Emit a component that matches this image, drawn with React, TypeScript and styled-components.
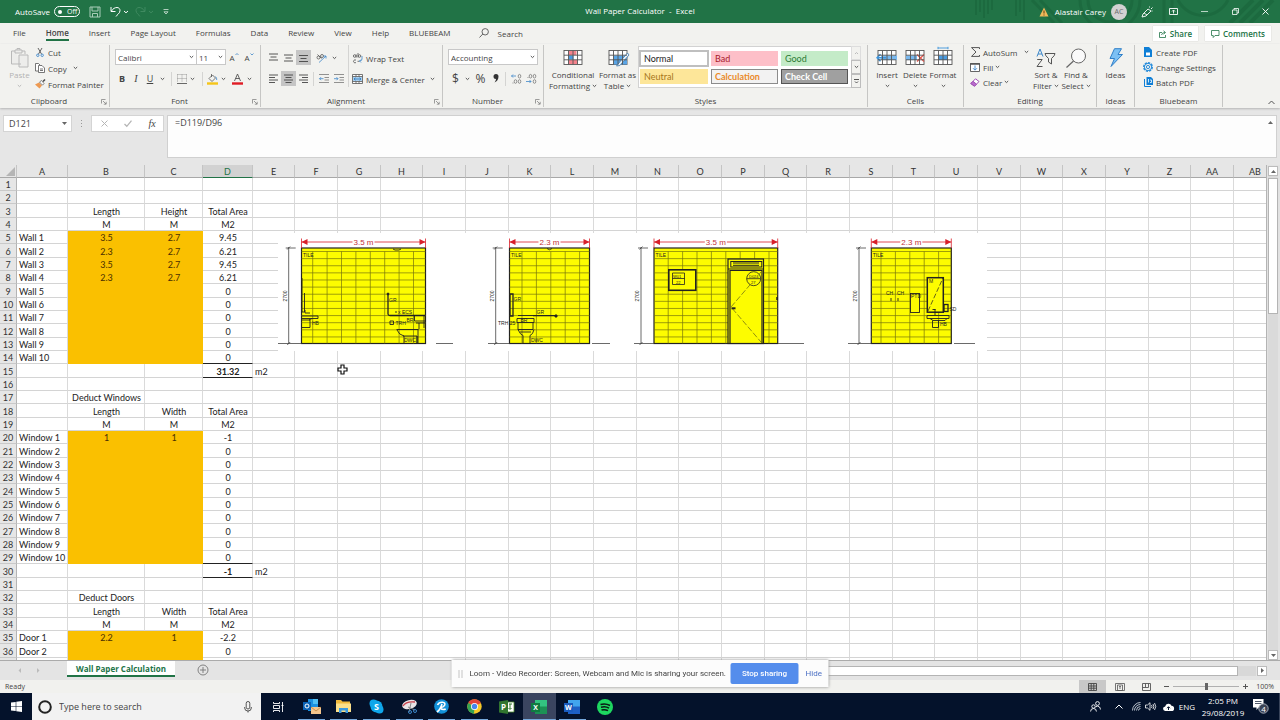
import React from "react";
import styled, { createGlobalStyle, css } from "styled-components";

const ui = `"Open Sans", "Noto Sans", sans-serif`;
const sheetFont = `Lato, "Open Sans", sans-serif`;
const green = "#217346";
const ink = "#444";

const Global = createGlobalStyle`
  *, *::before, *::after { box-sizing: border-box; }
  html, body { margin: 0; padding: 0; background: #e6e6e6; }
  body { font: 8px/11px ${ui}; color: ${ink}; }
  button, input, select, textarea { font: inherit; color: inherit; margin: 0; padding: 0; border: 0; background: none; border-radius: 0; outline: none; }
  svg { display: block; flex: none; overflow: visible; }
`;

const Window = styled.div`
  display: flex;
  flex-direction: column;
  height: 100vh;
  overflow: hidden;
`;

/* ---------- icons ---------- */

type IconProps = { w: number; h: number; children: React.ReactNode; stroke?: string; sw?: number };
const Icon = ({ w, h, children, stroke = "#555", sw = 1 }: IconProps) => (
  <svg width={w} height={h} viewBox={`0 0 ${w} ${h}`} fill="none" stroke={stroke} strokeWidth={sw} aria-hidden="true">
    {children}
  </svg>
);

const Chevron = ({ color = "#555" }: { color?: string }) => (
  <Icon w={5} h={4} stroke={color}><path d="M.8 1l1.7 1.6L4.200 1" /></Icon>
);

const Lines = ({ rows, w = 9 }: { rows: [number, number, number][]; w?: number }) => (
  <Icon w={w} h={9} stroke="#444" sw={0.9}>
    {rows.map(([x, y, len], i) => <path key={i} d={`M${x} ${y}h${len}`} />)}
  </Icon>
);

const TableGlyph = ({ children }: { children?: React.ReactNode }) => (
  <Icon w={20} h={19} stroke="#555" sw={0.9}>
    <rect x="1" y="2.500" width="18" height="14" fill="#fff" />
    {children}
    <path d="M1 7.200h18M1 11.800h18M5.500 2.500v14M10 2.500v14M14.500 2.500v14" />
  </Icon>
);

/* ---------- title bar ---------- */

const TitleBar = styled.header`
  position: relative;
  flex: none;
  display: grid;
  grid-template-columns: 1fr auto 1fr;
  align-items: center;
  height: 23px;
  background: ${green};
  color: #fff;
`;
const TitleArt = styled.svg`
  position: absolute;
  top: 0;
  right: 0;
  overflow: hidden;
  opacity: 0.6;
`;
const TitleSide = styled.div<{ $end?: boolean }>`
  position: relative;
  display: flex;
  align-items: center;
  justify-content: ${p => (p.$end ? "flex-end" : "flex-start")};
  padding-left: 15px;
`;
const TitleText = styled.h1`
  align-self: start;
  margin: 0;
  font: 8px/21px ${ui};
  white-space: pre;
`;
const TitleButton = styled.button<{ $w: number }>`
  display: flex;
  align-items: center;
  justify-content: center;
  width: ${p => p.$w}px;
  height: 22px;
`;
const Toggle = styled.button`
  display: flex;
  align-items: center;
  gap: 5px;
  width: 26px;
  height: 11px;
  margin-left: 4px;
  padding-left: 3px;
  border: 1px solid #fff;
  border-radius: 6px;
  font-size: 7px;
  line-height: 9px;
  &::before { content: ""; width: 4px; height: 4px; border-radius: 50%; background: #fff; }
`;
const Avatar = styled.span`
  width: 16px;
  height: 16px;
  margin: 0 9px 0 5px;
  border-radius: 50%;
  background: #d2d2d2;
  color: #6b6b6b;
  font-size: 7px;
  line-height: 16px;
  text-align: center;
`;

/* ---------- tabs ---------- */

const TabRow = styled.nav`
  flex: none;
  display: flex;
  align-items: flex-start;
  height: 21px;
  padding: 0 9px 0 3px;
  background: #f2f2ef;
`;
const Tab = styled.button<{ $active?: boolean }>`
  height: 18px;
  margin: 0 10px;
  padding-top: 2px;
  border-bottom: 2px solid ${p => (p.$active ? green : "transparent")};
  font-weight: ${p => (p.$active ? 600 : 400)};
  font-size: 8px;
`;
const SearchTab = styled.button`
  display: flex;
  align-items: center;
  gap: 9px;
  height: 20px;
  margin-left: 18px;
`;
const TabActions = styled.div`
  display: flex;
  gap: 7px;
  margin: 3px 0 0 auto;
`;
const ActionButton = styled.button`
  display: flex;
  align-items: center;
  gap: 3px;
  height: 15px;
  padding: 0 6px;
  background: #fff;
  color: ${green};
  font-weight: 600;
  box-shadow: 0 0 1px #bbb;
`;

/* ---------- ribbon ---------- */

const Ribbon = styled.section`
  position: relative;
  z-index: 1;
  flex: none;
  display: flex;
  height: 64px;
  background: #f2f2ef;
  box-shadow: 0 1px 2px #b5b5b5;
`;
const GroupBox = styled.div<{ $w: number }>`
  position: relative;
  flex: none;
  display: flex;
  flex-direction: column;
  width: ${p => p.$w}px;
  margin: 1px 0;
  border-right: 1px solid #c6c6c4;
`;
const GroupBody = styled.div<{ $pad: number }>`
  flex: 1;
  display: flex;
  padding: 0 0 0 ${p => p.$pad}px;
`;
const GroupLabel = styled.div<{ $inset?: boolean }>`
  display: flex;
  justify-content: center;
  height: 12px;
  padding-right: ${p => (p.$inset ? 11 : 0)}px;
  line-height: 12px;
`;
const Launcher = styled.button`
  position: absolute;
  right: 1px;
  bottom: 2px;
  width: 7px;
  height: 7px;
`;
const Col = styled.div<{ $gap?: number; $top?: number; $w?: number }>`
  display: flex;
  flex-direction: column;
  gap: ${p => p.$gap ?? 0}px;
  padding-top: ${p => p.$top ?? 0}px;
  ${p => p.$w && css`width: ${p.$w}px;`}
`;
const Row = styled.div<{ $h?: number }>`
  display: flex;
  align-items: center;
  height: ${p => p.$h ?? 15}px;
`;
const Slot = styled.button<{ $w: number; $on?: boolean }>`
  display: flex;
  align-items: center;
  justify-content: center;
  flex: none;
  width: ${p => p.$w}px;
  height: 15px;
  background: ${p => (p.$on ? "#c5c5c5" : "none")};
`;
const Letter = styled(Slot)<{ $kind: "b" | "i" | "u" | "n" }>`
  font-size: 9px;
  ${p => p.$kind === "b" && css`font-weight: 700;`}
  ${p => p.$kind === "i" && css`font-family: "Liberation Serif", serif; font-style: italic; font-size: 10px;`}
  ${p => p.$kind === "u" && css`text-decoration: underline;`}
  ${p => p.$kind === "n" && css`font-size: 12px;`}
`;
const Rule = styled.span<{ $w: number; $h?: number }>`
  display: flex;
  justify-content: center;
  width: ${p => p.$w}px;
  &::before { content: ""; width: 1px; height: ${p => p.$h ?? 14}px; background: #d4d4d2; }
`;
const Command = styled.button`
  display: flex;
  align-items: center;
  gap: 2px;
  height: 14px;
  white-space: nowrap;
`;
const CommandIcon = styled.span<{ $w?: number }>`
  display: flex;
  justify-content: center;
  width: ${p => p.$w ?? 12}px;
`;
const Spacer = styled.span<{ $w: number }>`
  width: ${p => p.$w}px;
`;
const BigButton = styled.button<{ $w: number; $faded?: boolean }>`
  display: flex;
  flex-direction: column;
  align-items: center;
  width: ${p => p.$w}px;
  height: 50px;
  padding-top: 2px;
  line-height: 11px;
  white-space: nowrap;
  color: ${p => (p.$faded ? "#b3b3b3" : "inherit")};
`;
const BigIcon = styled.span`
  display: flex;
  align-items: center;
  height: 21px;
  margin-bottom: 1px;
`;
const Line = styled.span`
  display: flex;
  align-items: center;
  justify-content: center;
  gap: 2px;
  height: 11px;
`;
const PickerBox = styled.label<{ $w: number }>`
  position: relative;
  display: flex;
  align-items: center;
  width: ${p => p.$w}px;
  height: 16px;
  border: 1px solid #c8c8c8;
  background: #fff;
  & + & { border-left: 0; }
  svg { position: absolute; right: 2px; }
`;
const Picker = styled.select`
  appearance: none;
  width: 100%;
  height: 14px;
  padding-left: 2px;
`;
const Gallery = styled.div`
  display: grid;
  grid-template-columns: 68px 67px 67px;
  grid-auto-rows: 15px;
  gap: 3px;
  align-content: center;
  width: 213px;
  height: 42px;
  margin-top: 1px;
  padding: 0 1px;
  border: 1px solid #d2d2d2;
  border-right: 0;
  background: #fff;
`;
const StyleCell = styled.button<{ $bg: string; $fg: string; $edge?: string; $bold?: boolean }>`
  padding-left: 3px;
  font-family: ${sheetFont};
  font-size: 9px;
  font-weight: ${p => (p.$bold ? 700 : 400)};
  text-align: left;
  color: ${p => p.$fg};
  background: ${p => p.$bg};
  border: 1px solid ${p => p.$edge ?? p.$bg};
  ${p => p.$edge === "#bfbfbf" && css`box-shadow: 0 0 0 1px #bfbfbf;`}
`;
const GalleryArrows = styled.div`
  display: flex;
  flex-direction: column;
  width: 10px;
  height: 42px;
  margin-top: 1px;
`;
const GalleryArrow = styled.button<{ $off?: boolean }>`
  flex: 1;
  display: flex;
  align-items: center;
  justify-content: center;
  border: 1px solid ${p => (p.$off ? "#ddd" : "#bdbdbd")};
`;
const CollapseRibbon = styled.button`
  display: flex;
  align-items: center;
  align-self: flex-end;
  height: 12px;
  margin: 0 5px 0 auto;
`;

/* ---------- formula bar ---------- */

const FormulaBar = styled.section`
  flex: none;
  display: flex;
  align-items: flex-start;
  height: 57px;
  padding: 7px 3px 0;
  background: #e6e6e6;
`;
const NameBox = styled.label`
  display: flex;
  align-items: center;
  width: 69px;
  height: 17px;
  padding: 0 4px 0 5px;
  border: 1px solid #d4d4d4;
  background: #fff;
  input { flex: 1; min-width: 0; font-size: 9px; }
`;
const Grip = styled.span`
  width: 19px;
  height: 17px;
  display: flex;
  align-items: center;
  justify-content: center;
`;
const FxBox = styled.div`
  display: flex;
  align-items: center;
  width: 73px;
  height: 17px;
  margin-right: 3px;
  border: 1px solid #d4d4d4;
  background: #fff;
`;
const FormulaInput = styled.label`
  flex: 1;
  display: flex;
  height: 43px;
  padding: 1px 3px 1px 7px;
  border: 1px solid #d0d0d0;
  background: #fdfdfd;
  textarea { flex: 1; height: 36px; resize: none; font: 9px/12px ${ui}; }
`;

/* ---------- worksheet ---------- */

const Workspace = styled.main`
  position: relative;
  flex: 1;
  display: flex;
  min-height: 0;
`;
const Sheet = styled.div`
  position: relative;
  flex: 1;
  min-width: 0;
  overflow: hidden;
  background: #fff;
  border-right: 1px solid #b4b4b4;
`;
const Grid = styled.table`
  width: 1277px;
  min-width: 100%;
  table-layout: fixed;
  border-collapse: separate;
  border-spacing: 0;
  font: 9px/10px ${sheetFont};
  color: #222;
  tbody tr { height: 13px; }
  tbody tr:nth-child(3n) { height: 14px; }
`;
const ColHead = styled.th<{ $on?: boolean }>`
  height: 13px;
  padding: 1px 0 0;
  font-weight: 400;
  text-align: center;
  color: ${p => (p.$on ? green : "#333")};
  background: ${p => (p.$on ? "#d2d2d2" : "#e6e6e6")};
  border-right: 1px solid #c4c4c4;
  border-bottom: 1px solid ${p => (p.$on ? green : "#a8a8a8")};
`;
const RowHead = styled.th`
  padding: 2px 0 0;
  font-weight: 400;
  text-align: center;
  color: #333;
  background: #e6e6e6;
  border-right: 1px solid #b4b4b4;
  border-bottom: 1px solid #c9c9c9;
`;
const Cell = styled.td<{ $fill?: boolean; $total?: boolean; $above?: boolean; $center?: boolean }>`
  padding: 2px 0 0 ${p => (p.$center ? 1 : 2)}px;
  white-space: nowrap;
  overflow: hidden;
  text-align: ${p => (p.$center ? "center" : "left")};
  font-weight: ${p => (p.$total ? 700 : 400)};
  color: ${p => (p.$fill && p.$center ? "#4a2f00" : "inherit")};
  background: ${p => (p.$fill ? "#fac000" : "#fff")};
  border-right: 1px solid ${p => (p.$fill ? "#fac000" : "#dadada")};
  border-bottom: 1px solid ${p => (p.$total || p.$above ? "#222" : p.$fill ? "#fac000" : "#d4d4d4")};
`;
const Drawing = styled.svg`
  position: absolute;
  left: 278px;
  top: 68px;
`;
const Pointer = styled.svg`
  position: absolute;
  left: 337px;
  top: 199px;
`;
const VScroll = styled.div`
  display: flex;
  flex-direction: column;
  flex: none;
  width: 13px;
  padding: 1px 2px 0 1px;
  background: #e2e2e2;
`;
const ScrollButton = styled.button`
  flex: none;
  display: flex;
  align-items: center;
  justify-content: center;
  width: 10px;
  height: 10px;
  border: 1px solid #bcbcbc;
  background: #fff;
`;
const VTrack = styled.div`
  flex: 1;
  padding-top: 2px;
  background: #dadada;
  &::before { content: ""; display: block; height: 136px; border: 1px solid #b4b4b4; background: #fff; }
`;
const SheetBar = styled.div`
  flex: none;
  display: flex;
  height: 20px;
  background: #e4e4e4;
  border-top: 1px solid #ababab;
`;
const SheetNav = styled.div`
  display: flex;
  align-items: center;
  gap: 14px;
  width: 67px;
  padding-left: 18px;
`;
const SheetTab = styled.button`
  width: 108px;
  height: 16px;
  background: #fff;
  border-bottom: 2px solid ${green};
  color: ${green};
  font-weight: 700;
`;
const AddSheet = styled.button`
  display: flex;
  height: 18px;
  align-items: center;
  margin-left: 22px;
`;
const HScroll = styled.div`
  display: flex;
  align-items: center;
  width: 480px;
  margin: 0 13px 0 auto;
`;
const HTrack = styled.div`
  flex: 1;
  height: 10px;
  margin-right: 1px;
  padding-right: 18px;
  background: #d8d8d8;
  &::before { content: ""; display: block; height: 10px; border: 1px solid #b4b4b4; background: #fff; }
`;
const StatusBar = styled.footer`
  flex: none;
  display: flex;
  align-items: center;
  height: 13px;
  padding: 0 6px 0 5px;
  background: #f1f1ee;
  font-size: 7px;
`;
const StatusEnd = styled.div`
  display: flex;
  align-items: center;
  height: 13px;
  margin-left: auto;
`;
const ViewButton = styled.button<{ $on?: boolean }>`
  display: flex;
  align-items: center;
  justify-content: center;
  width: 27px;
  height: 13px;
  background: ${p => (p.$on ? "#c8c8c8" : "none")};
`;
const Zoom = styled.input`
  appearance: none;
  width: 66px;
  height: 9px;
  margin: 0 4px;
  background: linear-gradient(#b0b0b0, #b0b0b0) center / 100% 1px no-repeat;
  &::-webkit-slider-thumb { appearance: none; width: 3px; height: 7px; background: #666; }
`;

/* ---------- sharing notice ---------- */

const Notice = styled.aside`
  position: fixed;
  left: 50%;
  bottom: 33px;
  z-index: 2;
  display: flex;
  align-items: center;
  width: 377px;
  height: 27px;
  padding-left: 7px;
  transform: translateX(-50%);
  background: #fcfcfc;
  box-shadow: 0 0 3px #888;
`;
const NoticeText = styled.span`
  width: 268px;
  padding-left: 7px;
  font-family: Roboto, ${ui};
  white-space: nowrap;
`;
const StopButton = styled.button`
  width: 68px;
  height: 21px;
  margin-right: 7px;
  border-radius: 2px;
  background: #548dec;
  color: #fff;
  font-family: Roboto, ${ui};
  font-weight: 500;
`;
const HideLink = styled.a`
  color: #4c70c4;
  font-family: Roboto, ${ui};
  text-decoration: none;
`;

/* ---------- taskbar ---------- */

const Taskbar = styled.div`
  flex: none;
  display: flex;
  height: 27px;
  background: #04122b;
  color: #fff;
`;
const TaskButton = styled.button<{ $w: number }>`
  display: flex;
  align-items: center;
  justify-content: center;
  width: ${p => p.$w}px;
  height: 27px;
`;
const TaskSearch = styled.label`
  display: flex;
  align-items: center;
  width: 229px;
  padding: 0 9px 0 6px;
  background: #f2f2f2;
  color: #444;
  input { flex: 1; min-width: 0; margin-left: 7px; font: 9px/14px ${ui}; }
  input::placeholder { color: #444; opacity: 1; }
`;
const Apps = styled.div`
  display: flex;
  width: 326px;
`;
const AppButton = styled.button<{ $active?: boolean; $open?: boolean }>`
  flex: 1;
  display: flex;
  align-items: center;
  justify-content: center;
  height: 27px;
  background: ${p => (p.$active ? "#3a4560" : "none")};
  ${p => p.$open && css`
    background-image: linear-gradient(#76a9dc, #76a9dc);
    background-repeat: no-repeat;
    background-position: bottom;
    background-size: ${p.$active ? "100%" : "27px"} 1px;
  `}
`;
const Tray = styled.div`
  display: flex;
  align-items: center;
  margin-left: auto;
  padding-right: 2px;
  border-right: 1px solid #39445a;
`;
const Clock = styled.time`
  width: 50px;
  line-height: 12px;
  text-align: center;
`;

const Group = ({ w, label, pad = 5, launcher, children }: { w: number; label: string; pad?: number; launcher?: boolean; children: React.ReactNode }) => (
  <GroupBox $w={w}>
    <GroupBody $pad={pad}>{children}</GroupBody>
    <GroupLabel $inset={launcher}>{label}</GroupLabel>
    {launcher && (
      <Launcher aria-label={`${label} settings`}>
        <Icon w={6} h={6} stroke="#777" sw={0.7}><path d="M.5 4.500V.5h4M2 2l3 3M5.200 2.800v2.400H2.800" /></Icon>
      </Launcher>
    )}
  </GroupBox>
);

/* ---------- sheet data ---------- */

type RowData = { a?: string; b?: string; c?: string; d?: string; e?: string; fill?: boolean; total?: boolean; blank?: boolean };

const columns: [string, number][] = [["A", 51], ["B", 77], ["C", 58], ["D", 50]];
const cycle = [42, 43, 43];
[..."EFGHIJKLMNOPQRSTUVWXYZ", "AA", "AB"].forEach((name, i) => columns.push([name, cycle[i % 3]]));

const head = (c: string): RowData => ({ b: "Length", c, d: "Total Area" });
const units: RowData = { b: "M", c: "M", d: "M2" };
const items = (name: string, values: [string, string, string][], count: number): RowData[] =>
  Array.from({ length: count }, (_, i) => ({
    a: `${name} ${i + 1}`,
    b: values[i]?.[0],
    c: values[i]?.[1],
    d: values[i]?.[2] ?? "0",
    fill: true,
  }));

const rows: RowData[] = [
  {}, {}, head("Height"), units,
  ...items("Wall", [["3.5", "2.7", "9.45"], ["2.3", "2.7", "6.21"], ["3.5", "2.7", "9.45"], ["2.3", "2.7", "6.21"]], 10),
  { d: "31.32", e: "m2", total: true },
  {}, { b: "Deduct Windows" }, head("Width"), units,
  ...items("Window", [["1", "1", "-1"]], 10),
  { d: "-1", e: "m2", total: true },
  {}, { b: "Deduct Doors" }, head("Width"), units,
  ...items("Door", [["2.2", "1", "-2.2"]], 2),
  { fill: true, blank: true },
];

/* ---------- wall elevations ---------- */

const Wall = ({ x1, x2, first, dim, floor, label }: { x1: number; x2: number; first: number; dim: number; floor: [number, number, number]; label: string }) => {
  const mid = (x1 + x2) / 2;
  const joints: number[] = [];
  for (let x = first; x < x2 - 2; x += 14.4) joints.push(x);
  return (
    <g>
      <rect x={x1} y="248" width={x2 - x1} height="95.500" fill="#fdfc00" stroke="#222" strokeWidth="1.200" />
      <g stroke="#77760c" strokeWidth=".7">
        {Array.from({ length: 13 }, (_, i) => <path key={i} d={`M${x1} ${251.5 + i * 7.12}H${x2}`} />)}
        {joints.map(x => <path key={x} d={`M${x} 251.500V343.500`} />)}
      </g>
      <g stroke="#d8202a" strokeWidth=".8" fill="#d8202a">
        <path d={`M${x1} 242H${mid - 11}M${mid + 11} 242H${x2}M${x1} 238.500V248M${x2} 238.500V248`} />
        <path stroke="none" d={`M${x1} 242l6-3v6zM${x2} 242l-6-3v6z`} />
      </g>
      <text x={mid} y="245" fontSize="8" fill="#c23038" textAnchor="middle">{label}</text>
      <path d={`M${dim} 247V344M${dim - 3} 248h10M${floor[0]} 343.500H${x1}M${floor[1]} 343.500H${floor[2]}M${dim - 1.5} 249.500l3-3M${dim - 1.5} 345l3-3`} stroke="#444" strokeWidth=".8" />
      <text transform={`translate(${dim - 2} 296) rotate(-90)`} fontSize="5" fill="#222" textAnchor="middle">2700</text>
      <text x={x1 + 1.5} y="256.500" fontSize="5" fill="#222">TILE</text>
    </g>
  );
};

const Elevations = () => (
  <Drawing width="709" height="117" viewBox="278 233 709 117" fill="none" role="img" aria-label="Wall elevations" fontFamily="Liberation Sans, sans-serif">
    <rect x="278" y="233" width="709" height="118" fill="#fff" />
    <Wall x1={301.5} x2={425.5} first={312.7} dim={288.7} floor={[278, 436, 453]} label="3.5 m" />
    <Wall x1={509.5} x2={589.5} first={522} dim={495.7} floor={[488, 592, 610]} label="2.3 m" />
    <Wall x1={654} x2={777.7} first={668.2} dim={641} floor={[634, 778, 804]} label="3.5 m" />
    <Wall x1={871.3} x2={951.3} first={881} dim={859} floor={[848, 954, 975]} label="2.3 m" />
    <g stroke="#222" strokeWidth=".9">
      <path d="M302 278v34M304.500 293v19h-3M302 316h16v2.500h-16M302 320h8v7.500h-8M305 310v3h5M309 320l3-1.500" />
      <path d="M388 294v20q0 1.500 2 1.500h35" strokeWidth="1.300" />
      <circle cx="388" cy="294" r="1" fill="#222" />
      <path d="M414.500 316v5h11M416 323h9M419 323v6M396.500 329.500h22M397 330q2 5 7 6v7M403 336h14v7M418 329.500v13.500M417 336v7M424 315v13" />
      <path d="M390 321h3.500v3.500H390zM395 312h2M393 249l2 1h4l2-1" />
    </g>
    <g stroke="#222" strokeWidth=".9">
      <path d="M510 294h3v22h-3zM533 315.700h23" strokeWidth="1.300" />
      <circle cx="556" cy="316" r="1.200" fill="#222" />
      <path d="M518 315.500h16M517 318.500h17v4h-17zM518 323v6.500h15V323M518 329.500q2 5 5 6v8h7v-8q3-1 4-6M520 332h11M547 248.500q2.500 2.500 5 0" />
    </g>
    <g stroke="#222">
      <rect x="668.800" y="269.800" width="27" height="20.500" strokeWidth="1.600" fill="#fdfc00" />
      <path d="M672.500 273h12v11.500h-12zM672.500 278.500h12" strokeWidth=".8" />
      <rect x="728" y="259" width="35.500" height="84.500" fill="#fdfc00" strokeWidth="1.200" />
      <rect x="730.800" y="261.500" width="31" height="5.500" strokeWidth="1" />
      <path d="M733 263h26M733 265.300h26M728 269h35.500" strokeWidth="1" />
      <path d="M730 343.500V270.500h32V343" strokeWidth="1.200" />
      <path d="M761 272L731 307l30 35" strokeWidth=".5" strokeDasharray="6 2" />
      <circle cx="753.700" cy="278.700" r="7" fill="#fdfc00" strokeWidth=".8" />
      <path d="M746.700 278.700h14" strokeWidth=".8" />
      <path d="M731.500 308.300h4" strokeWidth="2" />
      <path d="M777 297v3" strokeWidth="1.500" />
    </g>
    <g stroke="#222" strokeWidth=".9">
      <rect x="910.500" y="293.500" width="9" height="19" fill="#fdfc00" />
      <rect x="927.300" y="277.700" width="16" height="34.500" fill="#fdfc00" strokeWidth="1.500" />
      <path d="M928 311l15-33" strokeWidth=".7" strokeDasharray="5 2" />
      <rect x="944" y="304.500" width="4" height="7" strokeWidth="1.300" />
      <path d="M927 315.500h22v3h-22zM930 318.500l3 2h12l2-2M932.500 320.500v7h6v-7M935 309v6M932.500 309.500h3M891 298v3M898 298v3" />
    </g>
    <g fill="#222" fontSize="5">
      <text x="312" y="325">HB</text>
      <text x="389" y="302">GR</text>
      <text x="398" y="313.500">x ECS</text>
      <text x="395.500" y="325">TRH</text>
      <text x="406.500" y="322">BR</text>
      <text x="404" y="341.500">DWC</text>
      <text x="513.500" y="301">GR</text>
      <text x="536.500" y="314">GR</text>
      <text x="520.500" y="321.500">BR</text>
      <text x="498" y="325">TRH 25</text>
      <text x="531" y="341.500">DWC</text>
      <text x="673" y="277.500" fontSize="4">W01</text>
      <text x="676" y="283.500" fontSize="4">22</text>
      <text x="749" y="278" fontSize="4">D024</text>
      <text x="751" y="283.500" fontSize="4">27</text>
      <text x="886" y="294.500">CH</text>
      <text x="897" y="294.500">CH</text>
      <text x="911" y="298">PTD</text>
      <text x="929" y="283">M</text>
      <text x="949.500" y="310.500">SD</text>
      <text x="940" y="326">HB</text>
    </g>
  </Drawing>
);

const gallery = [
  { label: "Normal", bg: "#fff", fg: "#222", edge: "#bfbfbf" },
  { label: "Bad", bg: "#fdbfc8", fg: "#a81b2c" },
  { label: "Good", bg: "#c4ebc8", fg: "#2c7a35" },
  { label: "Neutral", bg: "#fde699", fg: "#a8761a" },
  { label: "Calculation", bg: "#f2f2f2", fg: "#ea8a2a", edge: "#8c8c8c", bold: true },
  { label: "Check Cell", bg: "#a0a0a0", fg: "#fff", edge: "#555", bold: true },
];

const tabs = ["File", "Home", "Insert", "Page Layout", "Formulas", "Data", "Review", "View", "Help", "BLUEBEAM"];

const OfficeIcon = ({ letter, dark, light, mid }: { letter: string; dark: string; light: string; mid: string }) => (
  <Icon w={18} h={16} stroke="none">
    <path d="M5 1h12v7H5z" fill={light} /><path d="M5 7.500h12V15H5z" fill={mid} />
    <rect x="1" y="4" width="9" height="9" fill={dark} />
    <text x="5.500" y="11" fontSize="7" fontWeight="700" fill="#fff" textAnchor="middle" fontFamily="Open Sans">{letter}</text>
  </Icon>
);

const Drop = ({ w, label = "More options" }: { w: number; label?: string }) => (
  <Slot $w={w} aria-label={label}><Chevron /></Slot>
);

export default function App() {
  return (
    <Window>
      <Global />
      <TitleBar>
        <TitleArt width="310" height="23" viewBox="0 0 310 23" fill="none" stroke="#1a653c" aria-hidden="true">
          <path d="M6 0v15M10 0v12M14 0v18M18 0v14M22 0v10M46 0v16M50 0v12M54 0v20" strokeWidth="2" />
          <path d="M62 0l22 23M70 0l22 23M110 0a30 30 0 0 0 60 0M118 0a22 22 0 0 0 44 0M194 0v23M202 0v23M208 0a28 28 0 0 0 50 0" strokeWidth="3" />
          <path d="M260 23l23-23M270 23l23-23M280 23l23-23" strokeWidth="4" />
        </TitleArt>
        <TitleSide>
          <span>AutoSave</span>
          <Toggle aria-label="AutoSave off">Off</Toggle>
          <TitleButton $w={30} aria-label="Save">
            <Icon w={12} h={12} stroke="#a9cdb8"><path d="M1 1h10v10H1zM3 1v4h6V1M3.500 11V7.500h5V11" /></Icon>
          </TitleButton>
          <TitleButton $w={18} aria-label="Undo">
            <Icon w={18} h={12} stroke="#fff"><path d="M1 1v4.500h4.500M1.500 5C3 2.500 5 1.500 7 1.500c2 0 3 1.500 3 3 0 3-3 4-4 6M14 5l2 1.800L18 5" /></Icon>
          </TitleButton>
          <TitleButton $w={32} aria-label="Redo">
            <Icon w={18} h={12} stroke="#3f8a60"><path d="M10 1v4.500H5.500M9.500 5C8 2.500 6 1.500 4 1.500c-2 0-3 1.500-3 3 0 3 3 4 4 6M14 5l2 1.800L18 5" /></Icon>
          </TitleButton>
          <TitleButton $w={12} aria-label="Customize toolbar">
            <Icon w={6} h={6} stroke="#d5e6dc" sw={0.8}><path d="M.5.500h5M1 2.800h4L3 5z" /></Icon>
          </TitleButton>
        </TitleSide>
        <TitleText>Wall Paper Calculator  -  Excel</TitleText>
        <TitleSide $end>
          <Icon w={10} h={10} stroke="none"><path d="M5 .5l4.500 9h-9z" fill="#f0b95a" /><path d="M5 3.500v3M5 7.500v1" stroke="#5a3c10" /></Icon>
          <Spacer $w={6} />
          <span>Alastair Carey</span>
          <Avatar>AC</Avatar>
          <TitleButton $w={22} aria-label="Coming soon">
            <Icon w={12} h={12} stroke="#fff" sw={0.9}><path d="M1 11l1-3 5-5 3 2-5 5zM3 7l3 2M8.500 1.500v-1M10 3l1.500-1.500M10.500 5h1" /></Icon>
          </TitleButton>
          <TitleButton $w={30} aria-label="Ribbon display options">
            <Icon w={9} h={7} stroke="#fff" sw={0.9}><path d="M.5.500h8v6h-8zM4.500 5.500V2.200M3 3.500l1.500-1.500L6 3.500" /></Icon>
          </TitleButton>
          <TitleButton $w={32} aria-label="Minimize"><Icon w={7} h={7} stroke="#b8d3c4"><path d="M0 3.500h7" /></Icon></TitleButton>
          <TitleButton $w={30} aria-label="Restore">
            <Icon w={7} h={7} stroke="#fff" sw={0.8}><path d="M.5 2h4.500v4.500H.5zM2 2V.5h4.500V5H5" /></Icon>
          </TitleButton>
          <TitleButton $w={30} aria-label="Close"><Icon w={7} h={7} stroke="#fff" sw={0.9}><path d="M.5.500l6 6M6.500.500l-6 6" /></Icon></TitleButton>
        </TitleSide>
      </TitleBar>

      <TabRow>
        {tabs.map(t => <Tab key={t} $active={t === "Home"}>{t}</Tab>)}
        <SearchTab>
          <Icon w={10} h={10} sw={0.9}><circle cx="6.200" cy="3.800" r="3.200" /><path d="M3.800 6L.5 9.500" /></Icon>
          Search
        </SearchTab>
        <TabActions>
          <ActionButton>
            <Icon w={8} h={8} stroke={green} sw={0.8}><path d="M3 2.500H.5v5h6V5M2.500 5q.5-2.500 3.500-2.500M4.500.800l2 1.700-2 1.700" /></Icon>
            Share
          </ActionButton>
          <ActionButton>
            <Icon w={9} h={8} stroke={green} sw={0.8}><path d="M.5.500h7.500v5H4L2.200 7.500v-2H.5z" /></Icon>
            Comments
          </ActionButton>
        </TabActions>
      </TabRow>

      <Ribbon>
        <Group w={110} label="Clipboard" pad={5} launcher>
          <BigButton $w={29} $faded>
            <BigIcon>
              <Icon w={19} h={20} stroke="#b9b9b9"><path d="M11 16H1.500V3H5M12 3h3v3M5 2h7v3H5zM7 2V.5h3V2M9 7h9v12H9z" fill="#ededeb" /></Icon>
            </BigIcon>
            <Line>Paste</Line>
            <Line><Chevron color="#bbb" /></Line>
          </BigButton>
          <Col $gap={2}>
            <Command>
              <CommandIcon><Icon w={8} h={9} stroke="#555" sw={0.9}><path d="M2 0l3.500 6M6 0L2.500 6" /><g stroke="#3d87c9"><circle cx="1.800" cy="7.300" r="1.200" /><circle cx="6.200" cy="7.300" r="1.200" /></g></Icon></CommandIcon>
              Cut
            </Command>
            <Command>
              <CommandIcon><Icon w={10} h={10} stroke="#555" sw={0.8}><path d="M3 8H.5V.5h3L5 2M3.500 2.500h3.500l2.500 2.500v4.500h-6zM5 6h3M5 7.500h3" fill="#fff" /></Icon></CommandIcon>
              Copy <Spacer $w={2} /><Chevron />
            </Command>
            <Command>
              <CommandIcon><Icon w={11} h={10} stroke="none"><path d="M0 5.500l4-2 3 3-2.500 3z" fill="#ee9a52" /><path d="M4.500 3l2-1.500 2.500 3-1.500 1.700z" fill="#fff" stroke="#555" strokeWidth=".7" /><path d="M8 2.500L10 .500" stroke="#444" strokeWidth="1.400" /></Icon></CommandIcon>
              Format Painter
            </Command>
          </Col>
        </Group>

        <Group w={151} label="Font" pad={5} launcher>
          <Col $gap={6} $top={4}>
            <Row $h={16}>
              <PickerBox $w={82}>
                <Picker aria-label="Font"><option>Calibri</option></Picker><Chevron />
              </PickerBox>
              <PickerBox $w={29}>
                <Picker aria-label="Font size"><option>11</option></Picker><Chevron />
              </PickerBox>
              <Slot $w={16} aria-label="Increase font size">A<Icon w={4} h={8} stroke="#3d87c9" sw={0.8}><path d="M.5 2l1.500-1.500L3.500 2" /></Icon></Slot>
              <Slot $w={14} aria-label="Decrease font size">A<Icon w={4} h={8} stroke="#3d87c9" sw={0.8}><path d="M.5.500L2 2 3.500.500" /></Icon></Slot>
            </Row>
            <Row>
              <Letter $w={14} $kind="b">B</Letter>
              <Letter $w={14} $kind="i">I</Letter>
              <Letter $w={14} $kind="u">U</Letter>
              <Drop w={10} />
              <Rule $w={9} />
              <Slot $w={11} aria-label="Borders">
                <Icon w={10} h={10} stroke="#888" sw={0.8}><path d="M.5.500h9M.5.500v8M9.500.500v8M5 .5v8M.5 4.500h9" strokeDasharray="1 1" /><path d="M0 9.500h10" stroke="#444" /></Icon>
              </Slot>
              <Drop w={11} />
              <Rule $w={8} />
              <Slot $w={13} aria-label="Fill color">
                <Icon w={11} h={12} stroke="#555" sw={0.8}><path d="M2 5.500L5.500 2l3 3L5 8.500zM4.500 1v3" /><path d="M8.500 3.500q1.500 1.500 1.200 3.500" stroke="#3d87c9" /><path d="M0 10.500h11" stroke="#f5c518" strokeWidth="2.400" /></Icon>
              </Slot>
              <Drop w={9} />
              <Slot $w={18} aria-label="Font color">
                <Icon w={11} h={12} stroke="#555" sw={0.9}><path d="M2.500 8L5.500 1l3 7M3.500 5.500h4" /><path d="M0 10.500h11" stroke="#e01b24" strokeWidth="2.400" /></Icon>
              </Slot>
              <Drop w={6} />
            </Row>
          </Col>
        </Group>

        <Group w={182} label="Alignment" pad={5} launcher>
          <Col $gap={6} $top={5} $w={80}>
            <Row>
              <Slot $w={15} aria-label="Top align"><Lines rows={[[0, 1, 9], [1.5, 4, 6], [0, 7, 9]]} /></Slot>
              <Slot $w={15} aria-label="Middle align"><Lines rows={[[0, 2, 9], [1.5, 5, 6], [0, 8, 9]]} /></Slot>
              <Slot $w={15} $on aria-label="Bottom align"><Lines rows={[[0, 2.5, 9], [1.5, 5.5, 6], [0, 8.5, 9]]} /></Slot>
              <Slot $w={20} aria-label="Orientation">
                <Icon w={11} h={10} stroke="#555" sw={0.8}><circle cx="2.500" cy="4.500" r="1.500" /><path d="M1.500 1.500l4 4" /><circle cx="6" cy="3" r="1.500" /><path d="M3 9.500L10 3M7.500 3H10v2.500" stroke="#3d87c9" /></Icon>
              </Slot>
              <Drop w={6} />
            </Row>
            <Row>
              <Slot $w={15} aria-label="Align left"><Lines rows={[[0, 1, 9], [0, 3.5, 6], [0, 6, 9], [0, 8.5, 6]]} /></Slot>
              <Slot $w={15} $on aria-label="Center"><Lines rows={[[0, 1, 9], [1.5, 3.5, 6], [0, 6, 9], [1.5, 8.5, 6]]} /></Slot>
              <Slot $w={15} aria-label="Align right"><Lines rows={[[0, 1, 9], [3, 3.5, 6], [0, 6, 9], [3, 8.5, 6]]} /></Slot>
              <Rule $w={5} />
              <Slot $w={15} aria-label="Decrease indent">
                <Icon w={10} h={9} stroke="#777" sw={0.8}><path d="M0 .5h10M5.500 3.500H10M5.500 6H10M0 8.500h10" /><path d="M4.500 4.700H.5M2 3.200L.5 4.700 2 6.200" stroke="#3d87c9" /></Icon>
              </Slot>
              <Slot $w={15} aria-label="Increase indent">
                <Icon w={10} h={9} stroke="#777" sw={0.8}><path d="M0 .5h10M5.500 3.500H10M5.500 6H10M0 8.500h10" /><path d="M0 4.700h4M2.500 3.200L4 4.700 2.500 6.200" stroke="#3d87c9" /></Icon>
              </Slot>
            </Row>
          </Col>
          <Rule $w={5} $h={42} />
          <Col $gap={7} $top={6}>
            <Command>
              <CommandIcon $w={13}>
                <Icon w={10} h={11} stroke="#555" sw={0.8}><circle cx="1.700" cy="3" r="1.300" /><path d="M3.200 1.500v3M5 0v4.500" /><circle cx="6.500" cy="3" r="1.300" /><path d="M3 7.200a1.500 1.500 0 1 0 0 2.300M4.500 8.300h2" /><path d="M9 3v3q0 2-2.500 2M8 6.500L6.500 8 8 9.500" stroke="#3d87c9" /></Icon>
              </CommandIcon>
              Wrap Text
            </Command>
            <Command>
              <CommandIcon $w={13}>
                <Icon w={11} h={10} stroke="#555" sw={0.8}><path d="M.5.500h10v9H.5zM.5 2.500h10M.5 7.500h10M4 .5v2M7 .5v2M4 7.500v2M7 7.500v2" fill="#fff" /><path d="M1 3h9v4H1z" fill="#a8d0f0" stroke="none" /><path d="M2 5h7M3.500 3.700L2 5l1.500 1.300M7.500 3.700L9 5 7.500 6.300" stroke="#2d77b9" /></Icon>
              </CommandIcon>
              Merge &amp; Center <Spacer $w={1} /><Chevron />
            </Command>
          </Col>
        </Group>

        <Group w={101} label="Number" pad={5} launcher>
          <Col $gap={6} $top={4}>
            <PickerBox $w={90}>
              <Picker aria-label="Number format"><option>Accounting</option></Picker><Chevron />
            </PickerBox>
            <Row>
              <Letter $w={15} $kind="n">$</Letter>
              <Drop w={8} />
              <Letter $w={19} $kind="n">%</Letter>
              <Slot $w={11} aria-label="Comma style"><Icon w={6} h={9} stroke="none"><path d="M3 0a2.500 2.500 0 0 1 2.500 2.500c0 3-1.500 5-4 6C2.500 7 3 6 3 5A2.500 2.500 0 0 1 3 0z" fill="#333" /></Icon></Slot>
              <Rule $w={8} />
              <Slot $w={15} aria-label="Increase decimal">
                <Icon w={11} h={10} stroke="#777" sw={0.8}><path d="M5 2H.5M2 .5L.5 2 2 3.500" stroke="#3d87c9" /><ellipse cx="8.500" cy="2.200" rx="1.300" ry="1.800" /><ellipse cx="4.500" cy="7.500" rx="1.300" ry="1.800" /><ellipse cx="8.500" cy="7.500" rx="1.300" ry="1.800" /><path d="M1.500 9h1" /></Icon>
              </Slot>
              <Slot $w={15} aria-label="Decrease decimal">
                <Icon w={11} h={10} stroke="#777" sw={0.8}><path d="M0 7.500h5M3.500 6L5 7.500 3.500 9" stroke="#3d87c9" /><ellipse cx="4.500" cy="2.200" rx="1.300" ry="1.800" /><ellipse cx="8.500" cy="2.200" rx="1.300" ry="1.800" /><ellipse cx="8.500" cy="7.500" rx="1.300" ry="1.800" /><path d="M1.500 3.500h1" /></Icon>
              </Slot>
            </Row>
          </Col>
        </Group>

        <Group w={324} label="Styles" pad={5}>
          <BigButton $w={48}>
            <BigIcon><TableGlyph><path d="M5.500 3h8v4h-8zM5.500 12h9v4h-9z" fill="#f4838c" stroke="none" /><path d="M5.500 7.500h5v4h-5z" fill="#4a9be0" stroke="none" /></TableGlyph></BigIcon>
            <Line>Conditional</Line>
            <Line>Formatting<Chevron /></Line>
          </BigButton>
          <BigButton $w={41}>
            <BigIcon>
              <TableGlyph><path d="M5.500 7.500H19v9H5.500z" fill="#5aa5e6" stroke="none" /><path d="M19.500 5l-7 8-4 5q4 .5 5.500-3l7-8z" fill="#e8f1fa" stroke="#3d77a9" strokeWidth=".8" /></TableGlyph>
            </BigIcon>
            <Line>Format as</Line>
            <Line>Table<Chevron /></Line>
          </BigButton>
          <Gallery>
            {gallery.map(s => (
              <StyleCell key={s.label} $bg={s.bg} $fg={s.fg} $edge={s.edge} $bold={s.bold}>{s.label}</StyleCell>
            ))}
          </Gallery>
          <GalleryArrows>
            <GalleryArrow $off aria-label="Previous styles"><Icon w={5} h={4} stroke="#bbb"><path d="M1 3l1.500-1.500L4 3" /></Icon></GalleryArrow>
            <GalleryArrow aria-label="Next styles"><Chevron /></GalleryArrow>
            <GalleryArrow aria-label="All styles"><Icon w={5} h={5}><path d="M0 .5h5M1 2.500L2.500 4 4 2.500" /></Icon></GalleryArrow>
          </GalleryArrows>
        </Group>

        <Group w={96} label="Cells" pad={5}>
          <BigButton $w={28}>
            <BigIcon><TableGlyph><path d="M4 7.500h16v4.500H4z" fill="#79b8ee" stroke="none" /><path d="M9 9.700H0M3.500 6.200L0 9.700l3.500 3.500" stroke="#3f94da" strokeWidth="1.400" /></TableGlyph></BigIcon>
            <Line>Insert</Line><Line><Chevron /></Line>
          </BigButton>
          <BigButton $w={28}>
            <BigIcon><TableGlyph><path d="M1 7.500h11v4.500H1z" fill="#79b8ee" stroke="none" /><path d="M12 6.500l7 7M19 6.500l-7 7" stroke="#e85a50" strokeWidth="1.300" /></TableGlyph></BigIcon>
            <Line>Delete</Line><Line><Chevron /></Line>
          </BigButton>
          <BigButton $w={28}>
            <BigIcon><TableGlyph><path d="M5.500 7.500h9v4.500h-9z" fill="#4a9be0" stroke="none" /><path d="M5 0h10M5-1.200v2.400M15-1.200v2.400" stroke="#3f94da" /></TableGlyph></BigIcon>
            <Line>Format</Line><Line><Chevron /></Line>
          </BigButton>
        </Group>

        <Group w={133} label="Editing" pad={5}>
          <Col $gap={1} $w={62}>
            <Command>
              <CommandIcon><Icon w={9} h={10}><path d="M8.500 2V.6h-8L5 5 .5 9.400h8V8" /></Icon></CommandIcon>
              AutoSum <Spacer $w={3} /><Chevron />
            </Command>
            <Command>
              <CommandIcon><Icon w={10} h={9} sw={0.9}><path d="M.5.500h9v8h-9z" fill="#fff" /><path d="M0 1h10" strokeWidth="1.500" /><path d="M5 2.500v4.500M3 5.200L5 7.200l2-2" stroke="#3d87c9" /></Icon></CommandIcon>
              Fill<Chevron />
            </Command>
            <Command>
              <CommandIcon><Icon w={10} h={9} stroke="#a04fb5"><path d="M.8 5.500L5.500.800l3.500 2.700L4.500 8.200z" fill="#fff" /><path d="M.8 5.500L3 3.300l3.500 2.900-2 2z" fill="#b96ccc" /></Icon></CommandIcon>
              Clear<Chevron />
            </Command>
          </Col>
          <BigButton $w={30}>
            <BigIcon>
              <Icon w={20} h={20} stroke="#555"><path d="M1 8.500L4 1l3 7.500M2 6h4" stroke="#3d87c9" /><path d="M1.200 11.500h5L1 18.500h5.500" /><path d="M9 5.500h10q0 2-3.500 5v5.500l-3-2v-3.500Q9 7.500 9 5.500z" /></Icon>
            </BigIcon>
            <Line>Sort &amp;</Line><Line>Filter<Chevron /></Line>
          </BigButton>
          <BigButton $w={30}>
            <BigIcon><Icon w={20} h={20} stroke="#666"><circle cx="12.500" cy="8" r="7" fill="#fafafa" /><path d="M7.500 13L.5 19.500" strokeWidth="1.200" /></Icon></BigIcon>
            <Line>Find &amp;</Line><Line>Select<Chevron /></Line>
          </BigButton>
        </Group>

        <Group w={38} label="Ideas" pad={0}>
          <BigButton $w={37}>
            <BigIcon><Icon w={14} h={19} stroke="#2f7fc8"><path d="M5.500.700h7L9 6.500h4.500L2 18.500l3.500-8H1z" fill="#7cc0f4" /></Icon></BigIcon>
            <Line>Ideas</Line>
          </BigButton>
        </Group>

        <Group w={88} label="Bluebeam" pad={7}>
          <Col $gap={1}>
            <Command>
              <CommandIcon><Icon w={8} h={10} stroke="none"><path d="M0 0h5l3 3v7H0z" fill="#0f7fd6" /><path d="M2 5.500h4v3H2z" fill="#fff" /></Icon></CommandIcon>
              Create PDF
            </Command>
            <Command>
              <CommandIcon><Icon w={10} h={10} stroke="#2b8fdc"><circle cx="5" cy="5" r="4.200" strokeWidth="1.600" strokeDasharray="2.200 1" /><circle cx="5" cy="5" r="3.600" /><circle cx="5" cy="5" r="1.600" /></Icon></CommandIcon>
              Change Settings
            </Command>
            <Command>
              <CommandIcon><Icon w={9} h={10} stroke="none"><path d="M2.500 0H7l2 2v6H2.500z" fill="#0f7fd6" /><path d="M.5 2v7.500H7" stroke="#0f7fd6" /><path d="M4.500 2v3.500M6 3h1.500v2.500H6" stroke="#fff" strokeWidth=".8" /></Icon></CommandIcon>
              Batch PDF
            </Command>
          </Col>
        </Group>
        <CollapseRibbon aria-label="Collapse ribbon"><Icon w={7} h={5}><path d="M.5 4l3-3 3 3" /></Icon></CollapseRibbon>
      </Ribbon>

      <FormulaBar>
        <NameBox>
          <input aria-label="Name box" defaultValue="D121" />
          <Icon w={5} h={3} stroke="none"><path d="M0 0h5L2.500 3z" fill="#666" /></Icon>
        </NameBox>
        <Grip><Icon w={1} h={8} stroke="#999"><path d="M.5 0v8" strokeDasharray="1 2" /></Icon></Grip>
        <FxBox>
          <Slot $w={24} aria-label="Cancel"><Icon w={7} h={7} stroke="#b5b5b5"><path d="M.5.500l6 6M6.500.500l-6 6" /></Icon></Slot>
          <Slot $w={24} aria-label="Enter"><Icon w={8} h={7} stroke="#b5b5b5" sw={1.3}><path d="M.5 4l2.300 2.300L7.500.700" /></Icon></Slot>
          <Letter $w={24} $kind="i">fx</Letter>
        </FxBox>
        <FormulaInput>
          <textarea aria-label="Formula" defaultValue="=D119/D96" />
          <Icon w={5} h={8} stroke="none"><path d="M0 7h5L2.500 4z" fill="#666" /></Icon>
        </FormulaInput>
      </FormulaBar>

      <Workspace>
        <Sheet>
          <Grid>
            <colgroup>
              <col width={17} />
              {columns.map(([name, w]) => <col key={name} width={w} />)}
            </colgroup>
            <thead>
              <tr>
                <ColHead aria-label="Select all"><Icon w={16} h={11} stroke="none"><path d="M15 1v9H6z" fill="#b5b5b5" /></Icon></ColHead>
                {columns.map(([name]) => <ColHead key={name} scope="col" $on={name === "D"}>{name}</ColHead>)}
              </tr>
            </thead>
            <tbody>
              {rows.map((r, i) => (
                <tr key={i}>
                  <RowHead scope="row">{r.blank ? "" : i + 1}</RowHead>
                  <Cell>{r.a}</Cell>
                  <Cell $center $fill={r.fill}>{r.b}</Cell>
                  <Cell $center $fill={r.fill}>{r.c}</Cell>
                  <Cell $center $total={r.total} $above={rows[i + 1]?.total}>{r.d}</Cell>
                  <Cell>{r.e}</Cell>
                  {columns.slice(5).map(([name]) => <Cell key={name} />)}
                </tr>
              ))}
            </tbody>
          </Grid>
          <Elevations />
          <Pointer width="11" height="11" viewBox="0 0 11 11" aria-hidden="true">
            <path d="M4 1h3v3h3v3H7v3H4V7H1V4h3z" fill="#fff" stroke="#111" strokeWidth="1.200" />
          </Pointer>
        </Sheet>
        <VScroll>
          <ScrollButton aria-label="Scroll up"><Icon w={5} h={3} stroke="none"><path d="M0 3h5L2.500 0z" fill="#666" /></Icon></ScrollButton>
          <VTrack />
          <ScrollButton aria-label="Scroll down"><Icon w={5} h={3} stroke="none"><path d="M0 0h5L2.500 3z" fill="#666" /></Icon></ScrollButton>
        </VScroll>
      </Workspace>

      <SheetBar>
        <SheetNav>
          <Icon w={4} h={5} stroke="none"><path d="M3 0v5L.500 2.500z" fill="#bbb" /></Icon>
          <Icon w={4} h={5} stroke="none"><path d="M1 0v5l2.500-2.500z" fill="#bbb" /></Icon>
        </SheetNav>
        <SheetTab>Wall Paper Calculation</SheetTab>
        <AddSheet aria-label="New sheet"><Icon w={12} h={12} stroke="#777" sw={0.9}><circle cx="6" cy="6" r="5" /><path d="M3 6h6M6 3v6" /></Icon></AddSheet>
        <HScroll>
          <HTrack />
          <ScrollButton aria-label="Scroll right"><Icon w={3} h={5} stroke="none"><path d="M0 0v5l3-2.500z" fill="#666" /></Icon></ScrollButton>
        </HScroll>
      </SheetBar>

      <StatusBar>
        Ready
        <StatusEnd>
          <ViewButton $on aria-label="Normal view"><Icon w={9} h={8} stroke="#444" sw={0.9}><path d="M.5.500h8v7h-8zM.5 3h8M.5 5.200h8M3.200.500v7M5.800.500v7" /></Icon></ViewButton>
          <ViewButton aria-label="Page layout view"><Icon w={10} h={8} sw={0.8}><path d="M.5.500h9v7h-9zM2.500 2h5v5.500h-5zM4 3.500h2M4 5h2" /></Icon></ViewButton>
          <ViewButton aria-label="Page break view"><Icon w={9} h={8} sw={0.9}><path d="M.5.500h8v7h-8zM3.500.500v4M.5 4.500h6V.5" /></Icon></ViewButton>
          <Spacer $w={4} />
          <Icon w={5} h={5}><path d="M0 2.500h5" /></Icon>
          <Zoom type="range" aria-label="Zoom" min={0} max={100} defaultValue={50} />
          <Icon w={5} h={5}><path d="M0 2.500h5M2.500 0v5" /></Icon>
          <Spacer $w={8} />
          100%
        </StatusEnd>
      </StatusBar>

      <Notice>
        <Icon w={4} h={8} stroke="#c4c4c4"><path d="M.5 0v8M3.500 0v8" /></Icon>
        <NoticeText>Loom - Video Recorder: Screen, Webcam and Mic is sharing your screen.</NoticeText>
        <StopButton>Stop sharing</StopButton>
        <HideLink href="#hide">Hide</HideLink>
      </Notice>

      <Taskbar>
        <TaskButton $w={32} aria-label="Start">
          <Icon w={11} h={11} stroke="none"><path d="M0 1.600l4.700-.7v4.300H0zM5.300.800L11 0v5.200H5.300zM0 5.800h4.700v4.300L0 9.400zM5.300 5.800H11V11l-5.700-.8z" fill="#fff" /></Icon>
        </TaskButton>
        <TaskSearch>
          <Icon w={14} h={14} stroke="#222" sw={2}><circle cx="7" cy="7" r="5.800" /></Icon>
          <input aria-label="Search" placeholder="Type here to search" />
          <Icon w={8} h={12} stroke="#444" sw={0.9}><rect x="2.200" y=".5" width="3.600" height="7.500" rx="1.800" /><path d="M.7 6v1q0 3 3.300 3t3.300-3V6M4 10v1.500" /></Icon>
        </TaskSearch>
        <TaskButton $w={34} aria-label="Task view">
          <Icon w={11} h={10} stroke="#fff" sw={0.9}><path d="M.5 0v1.500h6V0M.5 3.500h6v3h-6zM.5 10V8.500h6V10M9.500 0v10M8.500 3.500h2" /></Icon>
        </TaskButton>
        <Apps>
          <AppButton $open aria-label="Outlook">
            <Icon w={19} h={17} stroke="none"><path d="M6 1h10v12H6z" fill="#1a90e0" /><path d="M11 1h5v5h-5z" fill="#50c0f5" /><rect x="1" y="4" width="8" height="8" fill="#0b62b5" /><circle cx="5" cy="8" r="2" stroke="#fff" /><path d="M9 9h10v7H9z" fill="#f4c58c" /><path d="M9 9l5 4 5-4" stroke="#b98440" strokeWidth=".8" /></Icon>
          </AppButton>
          <AppButton $open aria-label="File Explorer">
            <Icon w={15} h={13} stroke="none"><path d="M0 0h5l1.500 1.500H14V12H0z" fill="#f0b93c" /><path d="M0 3.500h15V12H0z" fill="#fbe08a" /><path d="M3 13V8h9v5h-2.500v-2.500h-4V13z" fill="#3a9ae0" /></Icon>
          </AppButton>
          <AppButton $open aria-label="Skype">
            <Icon w={15} h={15} stroke="none"><circle cx="7.500" cy="7.500" r="6" fill="#0fa6ea" /><circle cx="4.500" cy="4.500" r="4" fill="#0fa6ea" /><circle cx="10.500" cy="10.500" r="4" fill="#0fa6ea" /><text x="7.500" y="11" fontSize="9" fontWeight="700" fill="#fff" textAnchor="middle" fontFamily="Open Sans">S</text></Icon>
          </AppButton>
          <AppButton $open aria-label="Snipping Tool">
            <Icon w={17} h={15} stroke="none"><ellipse cx="8.500" cy="5.500" rx="7.500" ry="4.500" transform="rotate(-15 8.500 5.500)" fill="#e9e4e6" /><path d="M2 7q3-5 12-4" stroke="#c9424c" strokeWidth="1.300" /><path d="M10 4L8 13M7 8l7 3" stroke="#888" /><circle cx="9" cy="13" r="1.500" stroke="#3d87c9" /><circle cx="14" cy="12" r="1.500" stroke="#3d87c9" /></Icon>
          </AppButton>
          <AppButton $open aria-label="Bluebeam Revu">
            <Icon w={15} h={15} stroke="#fff" sw={1.8}><circle cx="7.500" cy="7.500" r="7.300" fill="#1291d8" stroke="none" /><path d="M3 13Q6.500 10.500 8 5M3.500 6Q5 3 8.500 3.200q3 .3 2.200 2.800-.8 2.200-4 2.800 1.500 2.700 5 1.200" strokeWidth="1.600" /></Icon>
          </AppButton>
          <AppButton $open aria-label="Chrome">
            <Icon w={15} h={15} stroke="none"><circle cx="7.500" cy="7.500" r="7.200" fill="#f6c928" /><path d="M7.500 7.500L1.300 3.900A7.200 7.200 0 0 1 13.700 3.900z" fill="#e2453a" /><path d="M7.500 7.500L1.300 3.900a7.200 7.200 0 0 0 5.700 10.800z" fill="#35a454" /><path d="M7.500 3.900h6.200" stroke="#e2453a" strokeWidth=".6" /><circle cx="7.500" cy="7.500" r="3.500" fill="#fff" /><circle cx="7.500" cy="7.500" r="2.700" fill="#4586ef" /></Icon>
          </AppButton>
          <AppButton aria-label="Project">
            <Icon w={16} h={14} stroke="none"><path d="M7 2h8v10H7z" fill="#fff" stroke="#4b8a2c" strokeWidth=".8" /><path d="M11 4v5M9.500 8l1.500 1.500L12.500 8M10 4h3" stroke="#31752f" /><path d="M0 1.500L9 0v14l-9-1.500z" fill="#31752f" /><text x="4.500" y="10" fontSize="8" fontWeight="700" fill="#fff" textAnchor="middle" fontFamily="Open Sans">P</text></Icon>
          </AppButton>
          <AppButton $active $open aria-label="Excel"><OfficeIcon letter="X" dark="#107c41" light="#33c481" mid="#1c9155" /></AppButton>
          <AppButton $open aria-label="Word"><OfficeIcon letter="W" dark="#185abd" light="#41a5ee" mid="#1d5fc4" /></AppButton>
          <AppButton aria-label="Spotify">
            <Icon w={16} h={16} stroke="#0a1a14" sw={1.5}><circle cx="8" cy="8" r="8" fill="#1ed760" stroke="none" /><path d="M3.500 5.500q5-1.500 9.500 1M4 8.300q4.500-1.300 8 .9M4.500 11q3.500-1 6.500.7" /></Icon>
          </AppButton>
        </Apps>
        <Tray>
          <TaskButton $w={24} aria-label="People">
            <Icon w={11} h={11} stroke="#fff" sw={0.9}><circle cx="7.500" cy="2.500" r="1.900" /><path d="M5.500 6q2-1.800 4 0 .9 1 .9 2.500" /><circle cx="3.500" cy="5.500" r="1.700" /><path d="M.6 10.500q0-3 2.900-3t2.900 3" /></Icon>
          </TaskButton>
          <TaskButton $w={24} aria-label="Hidden icons"><Icon w={8} h={5} stroke="#fff"><path d="M.5 4.500L4 1l3.500 3.500" /></Icon></TaskButton>
          <TaskButton $w={10} aria-label="Network"><Icon w={9} h={9} stroke="#ccd2dc" sw={0.9}><path d="M.5 8.500A8 8 0 0 1 8.500.500M2.500 8.500a6 6 0 0 1 6-6M4.500 8.500a4 4 0 0 1 4-4M6.500 8.500a2 2 0 0 1 2-2" /></Icon></TaskButton>
          <TaskButton $w={19} aria-label="Volume"><Icon w={11} h={9} stroke="#fff" sw={0.8}><path d="M.5 3h2L5 .7v7.600L2.500 6h-2zM6.500 3q1 1.500 0 3M8 2q1.700 2.500 0 5M9.500 1q2.500 3.500 0 7" /></Icon></TaskButton>
          <TaskButton $w={16} aria-label="OneDrive"><Icon w={11} h={8} stroke="none"><path d="M2.500 8a2.300 2.300 0 0 1-.3-4.600A3.300 3.300 0 0 1 8.500 2.800 2.600 2.600 0 0 1 8.500 8z" fill="#fff" /><path d="M5.500 7V4M4 5.200L5.500 3.700 7 5.200" stroke="#04122b" /></Icon></TaskButton>
          <TaskButton $w={22}>ENG</TaskButton>
          <Clock>2:05 PM<br />29/08/2019</Clock>
          <TaskButton $w={25} aria-label="Notifications, 4 new">
            <Icon w={16} h={15} stroke="none"><path d="M0 0h10.500v8.500H5.500L3.500 11V8.500H0z" fill="#fff" /><path d="M2 2.500h6.500M2 4.500h6.500" stroke="#04122b" strokeWidth=".7" /><circle cx="10.500" cy="9.500" r="4.700" fill="#3a4356" stroke="#c0c6d0" strokeWidth=".8" /><text x="10.500" y="12.500" fontSize="8" fill="#fff" textAnchor="middle" fontFamily="Open Sans">4</text></Icon>
          </TaskButton>
          <Spacer $w={4} />
        </Tray>
      </Taskbar>
    </Window>
  );
}
